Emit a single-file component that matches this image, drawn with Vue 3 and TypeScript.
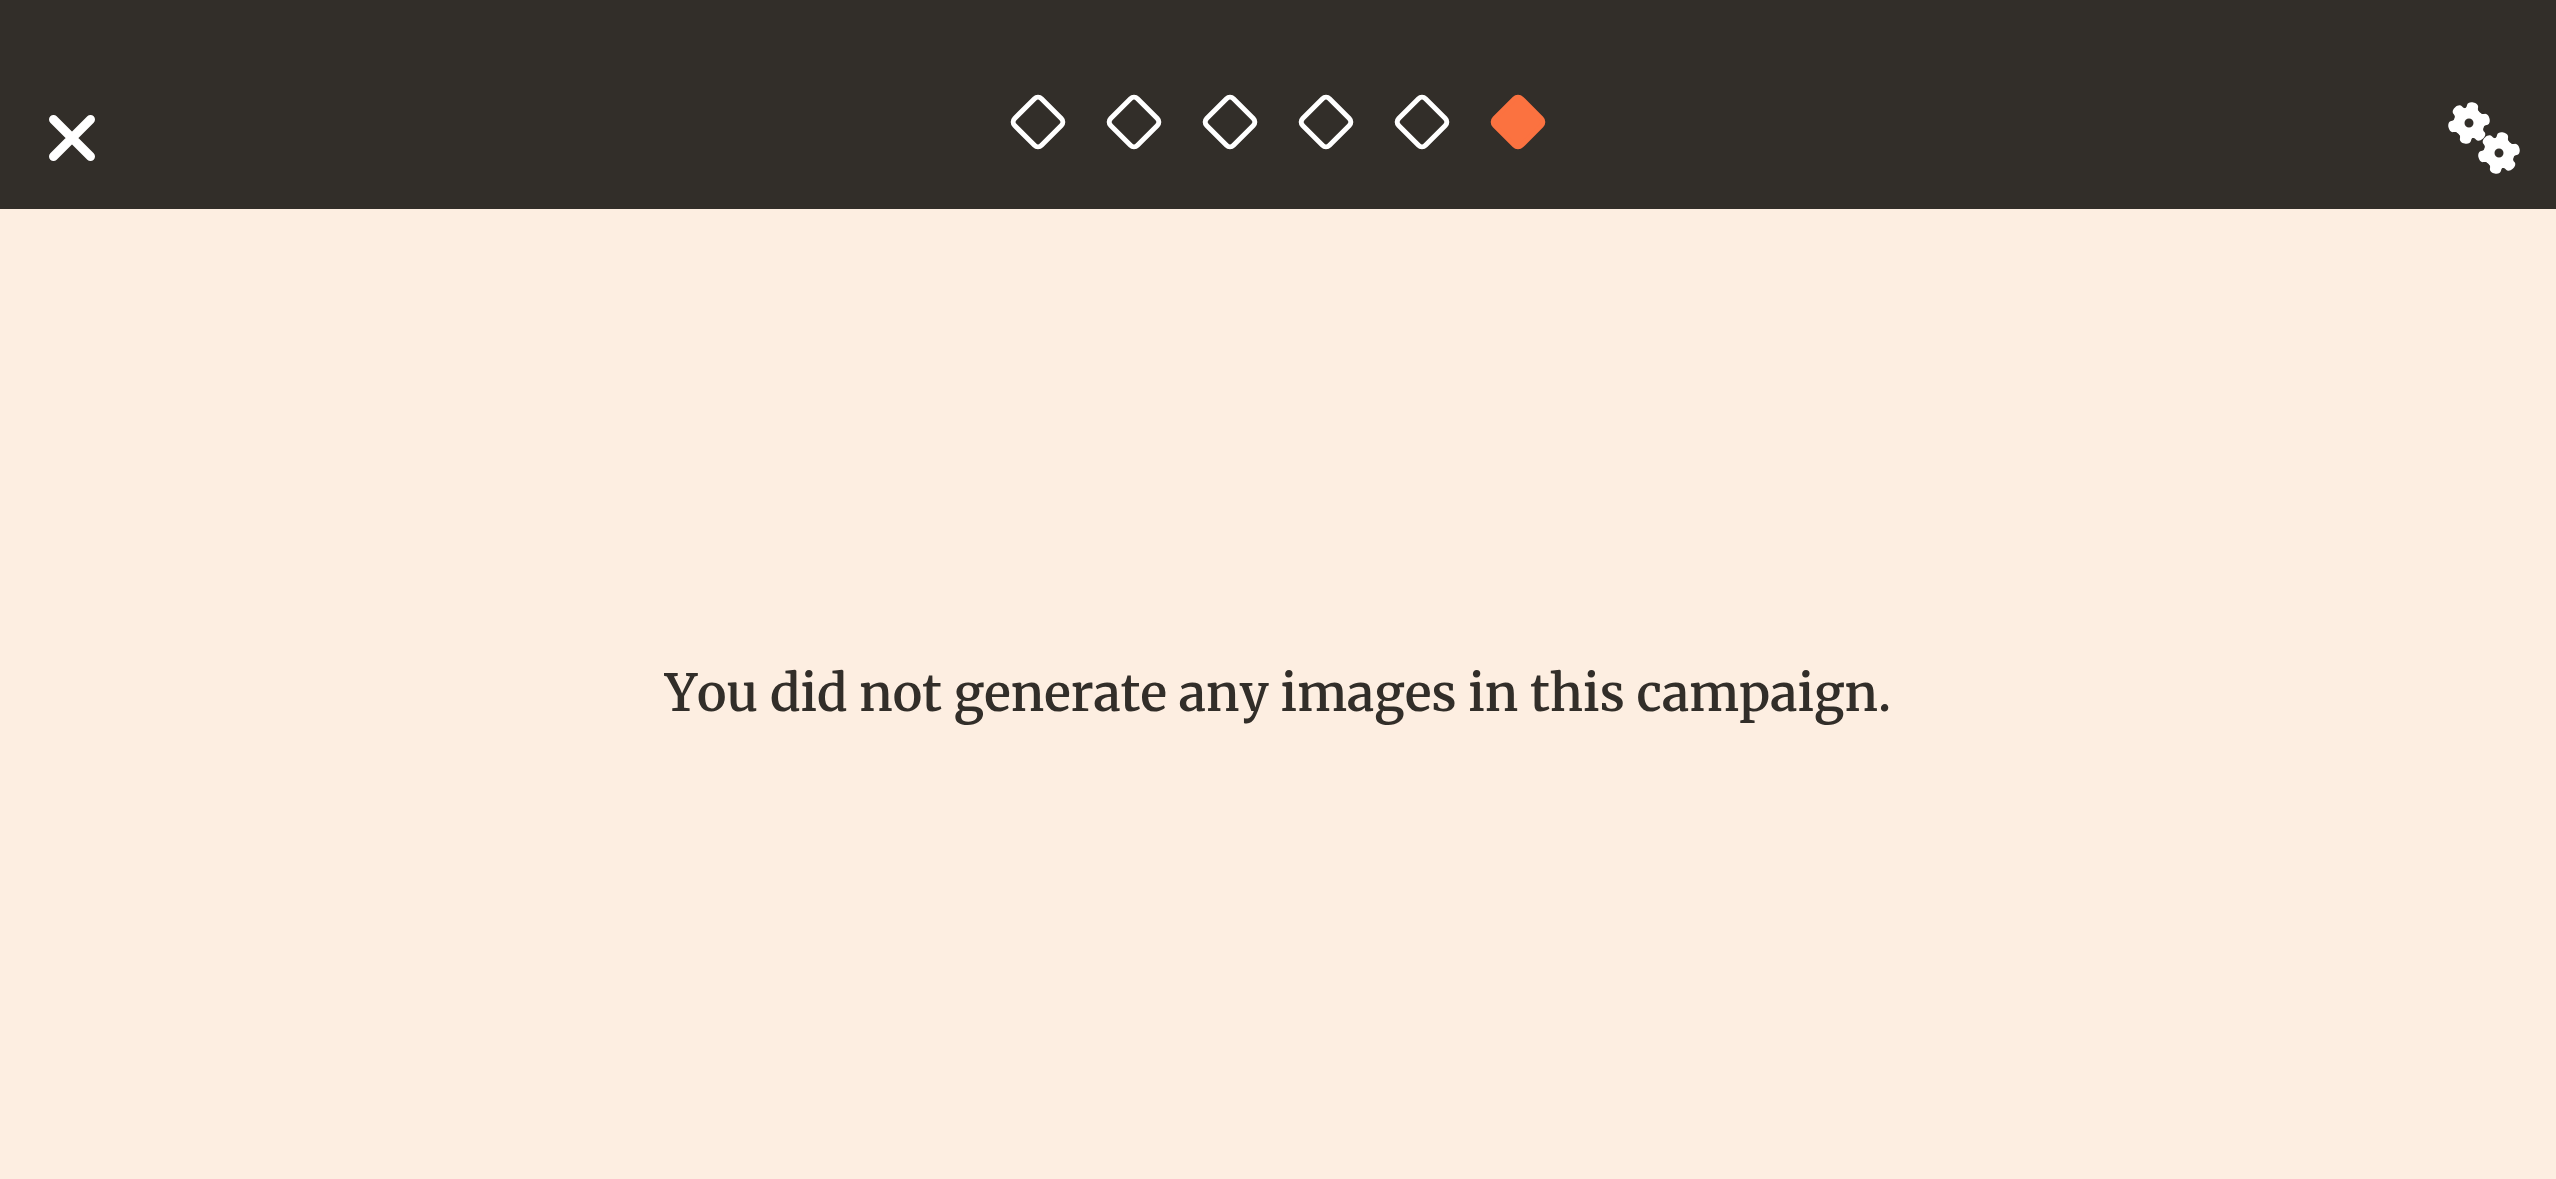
<script setup lang="ts">
interface Step {
  id: number
  current: boolean
}

const steps: Step[] = [1, 2, 3, 4, 5, 6].map((id) => ({ id, current: id === 6 }))

// One gear tooth pointing up, with the gear's centre as origin
const tooth = 'M-23-39C-18-42-17-46-17-51C-17-59-9-63 0-63C9-63 17-59 17-51C17-46 18-42 23-39L18-30H-18Z'
const toothAngles: number[] = [12, 78, 139, 192, 258, 319]
const gears: string[] = ['translate(117 99)', 'translate(207 189)']
</script>

<template>
  <div class="screen">
    <header class="topbar">
      <button class="icon-button close" type="button" aria-label="Close">
        <svg width="46" height="46" viewBox="0 0 46 46" aria-hidden="true">
          <path d="M4.5 4.5 41.5 41.5M41.5 4.5 4.5 41.5" fill="none" stroke="#fff" stroke-width="9" stroke-linecap="round" />
        </svg>
      </button>

      <ol class="steps" aria-label="Progress">
        <li v-for="step in steps" :key="step.id" class="step" :aria-current="step.current ? 'step' : undefined">
          <svg width="56" height="56" viewBox="-28 -28 56 56" aria-hidden="true">
            <rect
              x="-19" y="-19" width="38" height="38" rx="5"
              transform="rotate(45)"
              stroke-width="5"
              :fill="step.current ? '#fb7240' : 'none'"
              :stroke="step.current ? '#fb7240' : '#fff'"
            />
          </svg>
        </li>
      </ol>

      <button class="icon-button settings" type="button" aria-label="Settings">
        <svg width="72" height="72" viewBox="54 36 216 216" fill="#fff" aria-hidden="true">
          <g v-for="position in gears" :key="position" :transform="position">
            <circle r="29.5" fill="none" stroke="#fff" stroke-width="32" />
            <path v-for="angle in toothAngles" :key="angle" :d="tooth" :transform="`rotate(${angle})`" />
          </g>
        </svg>
      </button>
    </header>

    <main class="content">
      <p class="message">You did not generate any images in this campaign.</p>
    </main>
  </div>
</template>

<style>
body {
  margin: 0;
  background: #fdeee1;
}
</style>

<style scoped>
.screen {
  display: flex;
  flex-direction: column;
  min-height: 100vh;
  background: #fdeee1;
  color: #322e29;
}

.topbar {
  display: grid;
  grid-template-columns: 1fr auto 1fr;
  align-items: start;
  box-sizing: border-box;
  min-height: 209px;
  padding: 94px 36px 0;
  background: #322e29;
}

.icon-button {
  display: block;
  padding: 0;
  border: 0;
  background: none;
  cursor: pointer;
}

.icon-button svg,
.step svg {
  display: block;
}

.close {
  justify-self: start;
  margin: 21px 0 0 13px;
}

.settings {
  justify-self: end;
  margin-top: 8px;
}

.steps {
  display: flex;
  gap: 40px;
  margin: 0;
  padding: 0;
  list-style: none;
}

.content {
  display: flex;
  flex: 1;
  align-items: center;
  justify-content: center;
}

.message {
  margin: 0;
  font-family: Merriweather, "DejaVu Serif Condensed", "DejaVu Serif", serif;
  font-size: 50px;
  font-weight: 600;
  font-kerning: none;
  line-height: 72px;
}
</style>
